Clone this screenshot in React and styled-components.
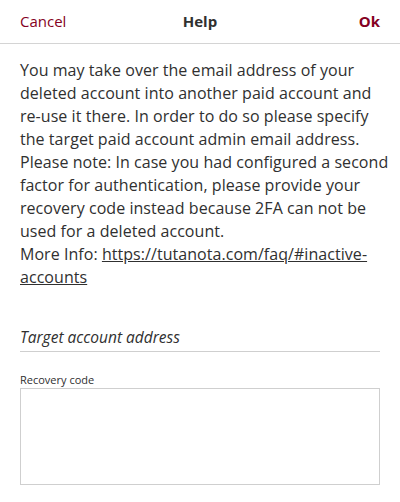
import React from 'react';
import styled, { createGlobalStyle } from 'styled-components';

const Global = createGlobalStyle`
  html, body { margin: 0; padding: 0; background: #fff; }
  body { font-family: "Open Sans", "Noto Sans", sans-serif; color: #303030; }
  * { box-sizing: border-box; }
`;

const Dialog = styled.div`
  width: 400px;
  height: 502px;
  background: #fff;
  border-radius: 6px;
  display: flex;
  flex-direction: column;
`;

const Header = styled.div`
  height: 44px;
  display: grid;
  grid-template-columns: 1fr auto 1fr;
  align-items: center;
  padding: 0 20px 2px;
  border-bottom: 1px solid #d4d4d4;
`;

const HeaderButton = styled.button`
  background: none;
  border: none;
  padding: 0;
  font-family: inherit;
  font-size: 15px;
  color: #850122;
  font-weight: ${p => (p.$bold ? 700 : 400)};
  justify-self: ${p => (p.$right ? 'end' : 'start')};
  cursor: pointer;
`;

const Title = styled.div`
  font-size: 15px;
  font-weight: 700;
  color: #303030;
`;

const Body = styled.div`
  padding: 15px 20px 0;
  display: flex;
  flex-direction: column;
`;

const Message = styled.p`
  margin: 0;
  font-size: 16px;
  letter-spacing: 0.05px;
  line-height: 23px;
  white-space: nowrap;
  color: #303030;
`;

const Link = styled.a`
  color: #303030;
  text-decoration: underline;
`;

const TextField = styled.input`
  margin-top: 35px;
  border: none;
  border-bottom: 1px solid #cfcfcf;
  padding: 0 0 2px;
  height: 28px;
  font-family: inherit;
  font-size: 15.5px;
  outline: none;
  &::placeholder { font-style: italic; color: #303030; }
`;

const Label = styled.label`
  margin-top: 20px;
  font-size: 11px;
  color: #303030;
`;

const Area = styled.textarea`
  margin-top: 1px;
  height: 97px;
  border: 1px solid #cfcfcf;
  resize: none;
  outline: none;
  font-family: inherit;
`;

const lines = [
  'You may take over the email address of your',
  'deleted account into another paid account and',
  're-use it there. In order to do so please specify',
  'the target paid account admin email address.',
  'Please note: In case you had configured a second',
  'factor for authentication, please provide your',
  'recovery code instead because 2FA can not be',
  'used for a deleted account.',
];

export default function App() {
  return (
    <>
      <Global />
      <Dialog>
        <Header>
          <HeaderButton>Cancel</HeaderButton>
          <Title>Help</Title>
          <HeaderButton $bold $right>Ok</HeaderButton>
        </Header>
        <Body>
          <Message>
            {lines.map((l, i) => (
              <React.Fragment key={i}>
                {l}
                <br />
              </React.Fragment>
            ))}
            More Info: <Link href="#">https://tutanota.com/faq/#inactive-</Link>
            <br />
            <Link href="#">accounts</Link>
          </Message>
          <TextField placeholder="Target account address" />
          <Label>Recovery code</Label>
          <Area />
        </Body>
      </Dialog>
    </>
  );
}
